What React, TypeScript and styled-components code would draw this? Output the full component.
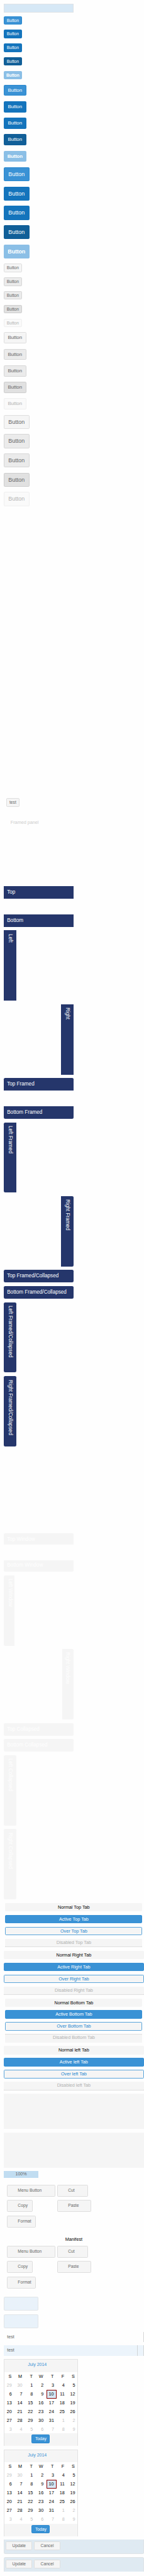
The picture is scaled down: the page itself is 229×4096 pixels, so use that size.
import React from "react";
import styled, { createGlobalStyle, css } from "styled-components";

const GlobalStyle = createGlobalStyle`
  html, body { margin: 0; padding: 0; background: #fefefe; overflow: hidden; }
  * { box-sizing: border-box; }
`;

/* The sheet is authored at 410px wide and shown reduced. */
const Sheet = styled.main`
  zoom: 0.55895;
  width: 410px;
  height: 7328px;
  overflow: hidden;
  display: flex;
  flex-direction: column;
  align-items: flex-start;
  padding: 10px 0 10px 10px;
  background: #fefefe;
  font-family: "Liberation Sans", Arial, Helvetica, sans-serif;
  font-size: 13px;
  color: #000;
`;

const Group = styled.section<{ $gap: number; $top?: number; $stretch?: boolean }>`
  display: flex;
  flex-direction: column;
  align-items: ${(p) => (p.$stretch ? "stretch" : "flex-start")};
  align-self: stretch;
  flex: none;
  gap: ${(p) => p.$gap}px;
  margin-top: ${(p) => p.$top ?? 10}px;
`;

const FocusBar = styled.div`
  flex: none;
  width: 200px;
  height: 26px;
  border: 1px solid #dde2e6;
  background: #d6e8f6;
`;

type Size = "small" | "medium" | "large";
type Tone =
  | "primary" | "primaryOver" | "primaryPressed" | "primaryDisabled"
  | "plain" | "plainOver" | "plainPressed" | "plainDisabled";

const tones: Record<Tone, [string, string, string]> = {
  primary: ["#3a92d5", "#2988cf", "#fff"],
  primaryOver: ["#1474bc", "#1474bc", "#fff"],
  primaryPressed: ["#115f98", "#115f98", "#fff"],
  primaryDisabled: ["#8bbfe6", "#8bbfe6", "#fff"],
  plain: ["#f5f5f5", "#dedede", "#666"],
  plainOver: ["#ebebeb", "#d6d6d6", "#666"],
  plainPressed: ["#e1e1e1", "#cecece", "#666"],
  plainDisabled: ["#fafafa", "#efefef", "#b2b2b2"],
};

const sizes: Record<Size, [number, number, number, number]> = {
  small: [53, 24, 12, 20],
  medium: [65, 32, 14, 29],
  large: [74, 40, 16, 36],
};

const Button = styled.button<{ $tone: Tone; $size?: Size; $width?: number }>`
  display: block;
  flex: none;
  margin: 0;
  padding: 0;
  border-radius: 3px;
  font-family: inherit;
  text-align: center;
  white-space: nowrap;
  ${(p) => {
    const [w, h, f, l] = sizes[p.$size ?? "small"];
    const [bg, edge, ink] = tones[p.$tone];
    return css`
      width: ${p.$width ?? w}px;
      height: ${h}px;
      padding-bottom: ${h - 2 - l}px;
      font-size: ${f}px;
      line-height: ${l}px;
      background: ${bg};
      border: 1px solid ${edge};
      color: ${ink};
      font-weight: ${p.$tone === "primaryDisabled" ? 700 : 400};
      letter-spacing: ${p.$tone === "primaryDisabled" ? "-0.3px" : "0"};
    `;
  }}
`;

const ToolPanel = styled.div`
  flex: none;
  height: 24px;
  margin: 831px 0 0 8px;
`;

const FramedPanel = styled.div`
  flex: none;
  width: 200px;
  height: 200px;
  margin-top: 16px;
  padding: 18px 20px;
  border-radius: 4px;
  line-height: 20px;
  color: #ccc;
`;

type Corners = "none" | "top" | "bottom" | "left" | "right" | "all";
const radii: Record<Corners, string> = {
  none: "0",
  top: "4px 4px 0 0",
  bottom: "0 0 4px 4px",
  left: "4px 0 0 4px",
  right: "0 4px 4px 0",
  all: "4px",
};

const HeaderBase = styled.header<{ $corners?: Corners; $window?: boolean }>`
  flex: none;
  font-size: 14.6px;
  white-space: nowrap;
  color: #fff;
  background: ${(p) => (p.$window ? "#f5f5f5" : "#25366b")};
  border-radius: ${(p) => radii[p.$corners ?? "none"]};
`;

const HeaderBar = styled(HeaderBase)<{ $height?: number; $lift?: number; $top?: number }>`
  width: 200px;
  height: ${(p) => p.$height ?? 36}px;
  margin-top: ${(p) => p.$top ?? 10}px;
  padding-left: 10px;
  line-height: ${(p) => p.$lift ?? 35}px;
`;

const HeaderColumn = styled(HeaderBase)<{ $end?: boolean; $width?: number; $line?: number; $start?: number }>`
  writing-mode: vertical-rl;
  width: ${(p) => p.$width ?? 36}px;
  height: 200px;
  margin-top: 10px;
  margin-left: ${(p) => (p.$end ? 200 - (p.$width ?? 36) : 0)}px;
  padding-top: ${(p) => p.$start ?? 9.5}px;
  line-height: ${(p) => p.$line ?? 34}px;
`;

type TabState = "normal" | "active" | "over" | "disabled";
const Tab = styled.div<{ $state: TabState; $inset?: boolean; $edge?: "top" | "bottom" }>`
  height: 24px;
  margin: 0 ${(p) => (p.$inset ? 5 : 0)}px;
  border: 1px solid transparent;
  border-radius: 3px;
  line-height: 20px;
  text-align: center;
  background: #f5f5f5;
  ${(p) => p.$state === "active" && css`background: #3a92d5; border-color: #3a92d5; color: #fff;`}
  ${(p) => p.$state === "over" && css`border-color: #5ba5db; color: #2385cf;`}
  ${(p) =>
    p.$state === "disabled" &&
    css`
      color: #b0b0b0;
      box-shadow: inset 0 ${p.$edge === "top" ? 1 : -1}px 0 #ccc;
      border-width: 0;
      border-radius: 2px;
      line-height: 22px;
    `}
`;

const GreyPanel = styled.div`
  height: 100px;
  background: #f5f5f5;
`;

const Progress = styled.div`
  flex: none;
  width: 100px;
  height: 20px;
  margin-top: 10px;
  background: #c1ddf1;
  color: #666;
  font-size: 12.7px;
  line-height: 18px;
  text-align: center;
`;

const MenuGrid = styled.div<{ $top: number }>`
  flex: none;
  display: grid;
  grid-template-columns: 143px 100px;
  grid-auto-rows: 34px;
  row-gap: 10px;
  justify-items: start;
  margin: ${(p) => p.$top}px 0 0 10px;
`;

const MenuButton = styled.button<{ $width: number }>`
  width: ${(p) => p.$width}px;
  height: 34px;
  margin: 0;
  padding: 0 0 2px 29px;
  border: 1px solid #dedede;
  border-radius: 3px;
  background: #f5f5f5;
  color: #666;
  font-family: inherit;
  font-size: 12px;
  line-height: 30px;
  text-align: left;
  white-space: nowrap;
`;

const GroupTitle = styled.div`
  flex: none;
  align-self: stretch;
  height: 20px;
  margin-top: 24px;
  line-height: 20px;
  text-align: center;
`;

const TipBox = styled.div`
  width: 100px;
  height: 40px;
  border: 1px solid #e1e5e8;
  border-radius: 3px;
  background: #e9f2fa;
`;

const GridHeader = styled.div<{ $over?: boolean }>`
  display: flex;
  justify-content: flex-end;
  height: 29px;
  padding-left: 10px;
  border-right: 1px solid #d6d6d6;
  background: ${(p) => (p.$over ? "#ecf4fb" : "transparent")};
  color: #666;
  line-height: 28px;
`;
const GridLabel = styled.span`
  flex: 1;
`;
const GridTrigger = styled.span`
  width: 18px;
  border-left: 1px solid #d2d4d6;
`;

const Picker = styled.div`
  width: 212px;
  height: 247px;
  border: 1px solid #e3e3e3;
  background: #fff;
`;
const PickerHead = styled.div`
  height: 35px;
  padding-right: 20px;
  background: #f5f5f5;
  color: #3a92d5;
  font-size: 12.6px;
  line-height: 29px;
  text-align: center;
`;
const PickerDays = styled.div`
  display: grid;
  grid-template-columns: repeat(7, 30px);
  grid-auto-rows: 25px;
`;
const DayName = styled.span`
  padding-right: 9px;
  line-height: 24px;
  text-align: right;
`;
const Day = styled.span<{ $out?: boolean; $today?: boolean }>`
  padding-right: 8px;
  border: 0 solid #8b0000;
  line-height: 24px;
  text-align: right;
  color: ${(p) => (p.$out ? "#bfbfbf" : "#000")};
  ${(p) => p.$today && css`border-width: 1px; padding-right: 7px; line-height: 22px; background: #d6e8f6;`}
`;
const PickerFoot = styled.div`
  display: flex;
  justify-content: center;
  height: 35px;
  padding-top: 3px;
  background: #f5f5f5;
`;

const EditorBar = styled.div<{ $side: "top" | "bottom" }>`
  display: flex;
  gap: 5px;
  height: 40px;
  padding: 5px;
  border: 1px solid #dfe3e6;
  background: #dfeaf2;
  ${(p) =>
    p.$side === "bottom"
      ? css`border-top: 0; border-radius: 0 0 5px 5px;`
      : css`border-bottom: 0; border-radius: 5px 5px 0 0;`}
`;

const buttonSizes: Size[] = ["small", "medium", "large"];
const primaryTones: Tone[] = ["primary", "primaryOver", "primaryOver", "primaryPressed", "primaryDisabled"];
const plainTones: Tone[] = ["plain", "plainOver", "plainOver", "plainPressed", "plainDisabled"];
const sides = ["Top", "Right", "Bottom", "left"];
const tabStates: [TabState, string][] = [
  ["normal", "Normal"], ["active", "Active"], ["over", "Over"], ["disabled", "Disabled"],
];

const days = [29, 30, ...Array.from({ length: 31 }, (_, i) => i + 1), 1, 2, 3, 4, 5, 6, 7, 8, 9];

const ButtonMenu = ({ top }: { top: number }) => (
  <MenuGrid $top={top}>
    <MenuButton $width={138}>Menu Button</MenuButton>
    <MenuButton $width={88}>Cut</MenuButton>
    <MenuButton $width={73}>Copy</MenuButton>
    <MenuButton $width={96}>Paste</MenuButton>
    <MenuButton $width={82}>Format</MenuButton>
  </MenuGrid>
);

const DatePicker = () => (
  <Picker>
    <PickerHead>July 2014</PickerHead>
    <PickerDays>
      {["S", "M", "T", "W", "T", "F", "S"].map((d, i) => (
        <DayName key={i}>{d}</DayName>
      ))}
      {days.map((d, i) => (
        <Day key={i} $out={i < 2 || i > 32} $today={i === 11}>{d}</Day>
      ))}
    </PickerDays>
    <PickerFoot>
      <Button $tone="primary" $width={52}>Today</Button>
    </PickerFoot>
  </Picker>
);

export default function App() {
  return (
    <>
      <GlobalStyle />
      <Sheet>
        <FocusBar />
        <Group $gap={15}>
          {[primaryTones, plainTones].map((set) =>
            buttonSizes.map((size) =>
              set.map((tone, i) => (
                <Button key={size + tone + i} $tone={tone} $size={size}>Button</Button>
              ))
            )
          )}
        </Group>

        <ToolPanel>
          <Button $tone="plain" $width={37}>test</Button>
        </ToolPanel>
        <FramedPanel>Framed panel</FramedPanel>

        <HeaderBar>Top</HeaderBar>
        <HeaderBar $top={44}>Bottom</HeaderBar>
        <HeaderColumn>Left</HeaderColumn>
        <HeaderColumn $end>Right</HeaderColumn>
        <HeaderBar $corners="top">Top Framed</HeaderBar>
        <HeaderBar $corners="bottom" $top={44}>Bottom Framed</HeaderBar>
        <HeaderColumn $corners="left">Left Framed</HeaderColumn>
        <HeaderColumn $end $corners="right">Right Framed</HeaderColumn>
        <HeaderBar $corners="all">Top Framed/Collapsed</HeaderBar>
        <HeaderBar $corners="all">Bottom Framed/Collapsed</HeaderBar>
        <HeaderColumn $corners="all" $start={10.5}>Left Framed/Collapsed</HeaderColumn>
        <HeaderColumn $corners="all" $start={10.5}>Right Framed/Collapsed</HeaderColumn>

        <HeaderBar $window $corners="top" $height={32} $top={247}>Top Window</HeaderBar>
        <HeaderBar $window $corners="bottom" $height={32} $top={46} $lift={27}>Bottom Window</HeaderBar>
        <HeaderColumn $window $corners="left" $width={32} $line={26}>Left Window</HeaderColumn>
        <HeaderColumn $window $corners="right" $end $width={32}>Right Window</HeaderColumn>
        <HeaderBar $window $corners="all">Top Collapsed</HeaderBar>
        <HeaderBar $window $corners="all">Bottom Collapsed</HeaderBar>
        <HeaderColumn $window $corners="all">Left Collapsed</HeaderColumn>
        <HeaderColumn $window $corners="all">Right Collapsed</HeaderColumn>

        <Group $gap={10} $stretch>
          {sides.map((side, s) =>
            tabStates.map(([state, label]) => (
              <Tab key={side + state} $state={state} $inset={s % 2 === 0} $edge={side === "Bottom" ? "top" : "bottom"}>
                {label} {side} Tab
              </Tab>
            ))
          )}
        </Group>

        <Group $gap={10} $stretch>
          <GreyPanel />
          <GreyPanel />
        </Group>
        <Progress>100%</Progress>

        <ButtonMenu top={18} />
        <GroupTitle>Manifest</GroupTitle>
        <ButtonMenu top={8} />

        <Group $gap={10} $top={23}>
          <TipBox />
          <TipBox />
        </Group>
        <Group $gap={10} $stretch>
          <GridHeader><GridLabel>test</GridLabel></GridHeader>
          <GridHeader $over><GridLabel>test</GridLabel><GridTrigger /></GridHeader>
        </Group>
        <Group $gap={10}>
          <DatePicker />
          <DatePicker />
        </Group>
        <Group $gap={10} $stretch>
          <EditorBar $side="bottom">
            <Button $tone="plain" $width={75}>Update</Button>
            <Button $tone="plain" $width={75}>Cancel</Button>
          </EditorBar>
          <EditorBar $side="top">
            <Button $tone="plain" $width={75}>Update</Button>
            <Button $tone="plain" $width={75}>Cancel</Button>
          </EditorBar>
        </Group>
      </Sheet>
    </>
  );
}
